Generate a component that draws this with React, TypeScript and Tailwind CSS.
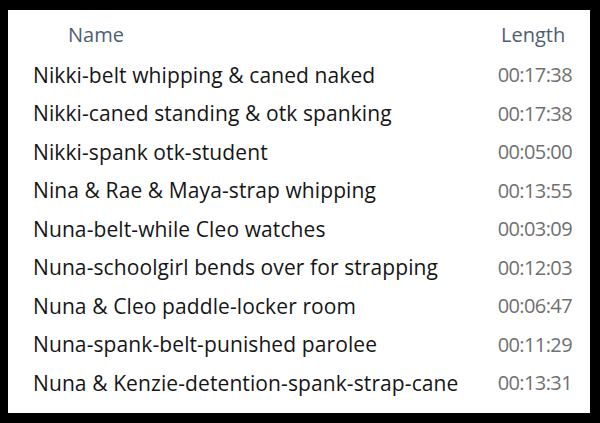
const rows: [string, string][] = [
  ['Nikki-belt whipping & caned naked', '00:17:38'],
  ['Nikki-caned standing & otk spanking', '00:17:38'],
  ['Nikki-spank otk-student', '00:05:00'],
  ['Nina & Rae & Maya-strap whipping', '00:13:55'],
  ['Nuna-belt-while Cleo watches', '00:03:09'],
  ['Nuna-schoolgirl bends over for strapping', '00:12:03'],
  ['Nuna & Cleo paddle-locker room', '00:06:47'],
  ['Nuna-spank-belt-punished parolee', '00:11:29'],
  ['Nuna & Kenzie-detention-spank-strap-cane', '00:13:31'],
];

export default function App() {
  return (
    <div className="w-[600px] h-[423px] bg-black pt-[10px] pb-[10px] pl-[8px] pr-[10px] font-['Open_Sans',sans-serif]">
      <div className="h-full w-full bg-white">
        <div className="flex h-[46px] pt-[4px] items-center text-[20px] text-[#4d5e74]">
          <div className="pl-[60px] flex-1">Name</div>
          <div className="w-[100px] pl-[11px]">Length</div>
        </div>
        <div className="flex flex-col">
          {rows.map(([name, len]) => (
            <div key={name} className="flex h-[38.5px] items-center text-[21px]">
              <div className="pl-[25px] flex-1 text-[#161616] whitespace-nowrap tracking-[0.1px]">{name}</div>
              <div className="w-[110px] pr-[18px] text-right text-[#707070] text-[20px] tracking-[-0.6px]">{len}</div>
            </div>
          ))}
        </div>
      </div>
    </div>
  );
}
